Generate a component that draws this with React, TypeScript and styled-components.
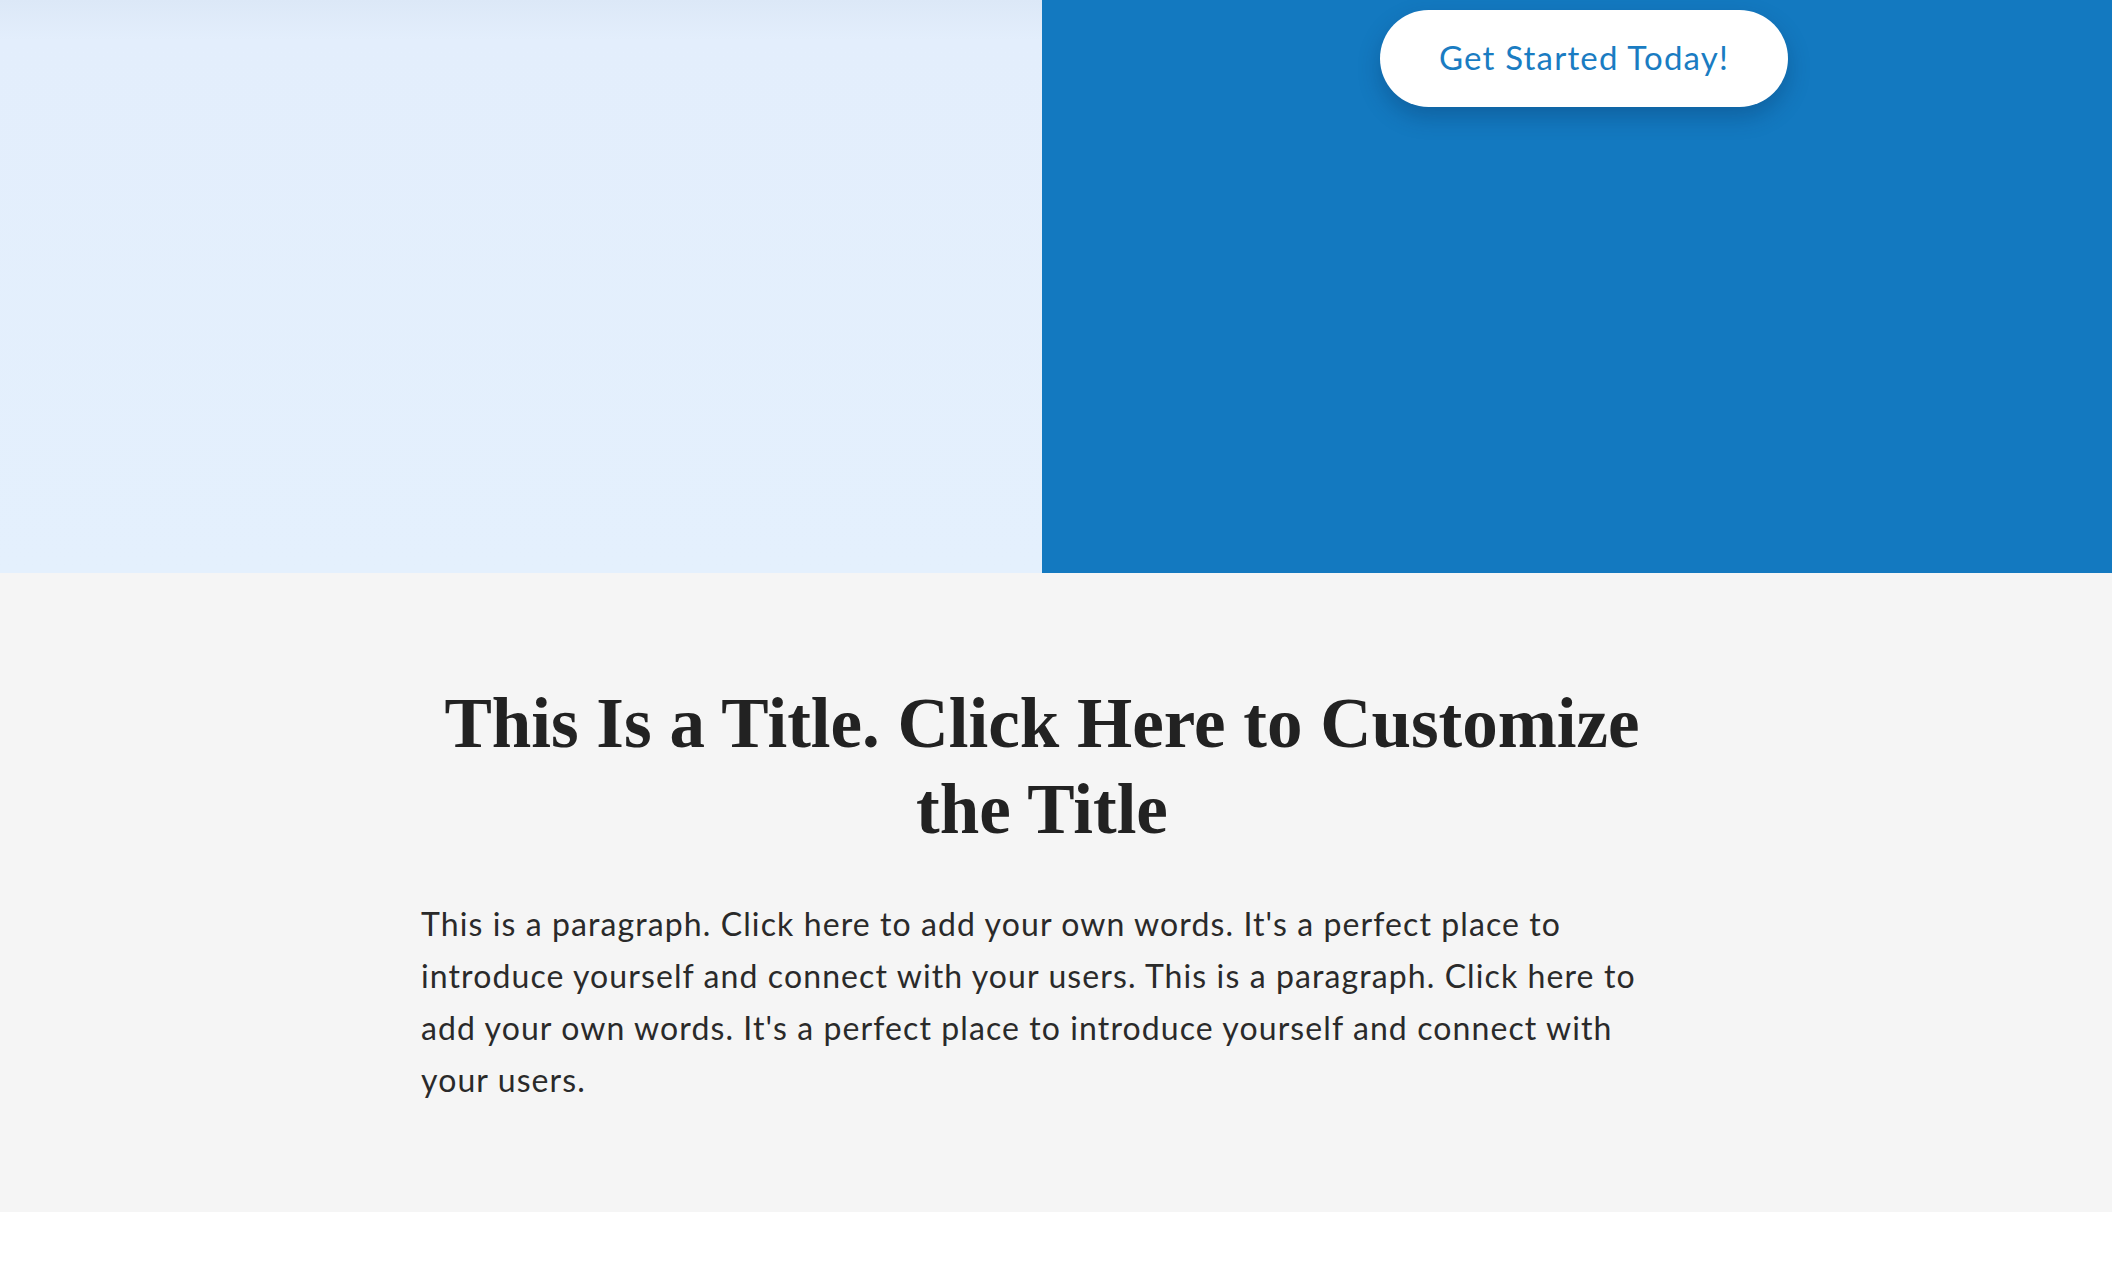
import React from "react";
import { styled, createGlobalStyle } from "styled-components";

const GlobalStyle = createGlobalStyle`
  html, body {
    margin: 0;
    padding: 0;
    background: #ffffff;
  }
  body {
    font-family: Lato, "Noto Sans", sans-serif;
  }
`;

function App() {
  return (
    <>
      <GlobalStyle />
      <Page>
        <Hero>
          <LightPanel />
          <BluePanel>
            <CtaButton type="button">Get Started Today!</CtaButton>
          </BluePanel>
        </Hero>
        <IntroSection>
          <IntroInner>
            <Title>This Is a Title. Click Here to Customize the Title</Title>
            <Paragraph>
              This is a paragraph. Click here to add your own words. It's a
              perfect place to introduce yourself and connect with your users.
              This is a paragraph. Click here to add your own words. It's a
              perfect place to introduce yourself and connect with your users.
            </Paragraph>
          </IntroInner>
        </IntroSection>
        <Footer />
      </Page>
    </>
  );
}

const Page = styled.div`
  width: 100%;
  min-height: 1280px;
  display: flex;
  flex-direction: column;
`;

const Hero = styled.section`
  display: grid;
  grid-template-columns: 1042px 1fr;
  height: 573px;
`;

const LightPanel = styled.div`
  background: linear-gradient(to bottom, #dce8f7 0px, #e3eefc 40px, #e4f0fd 100%);
`;

const BluePanel = styled.div`
  background: #1379c0;
  display: flex;
  justify-content: center;
  align-items: flex-start;
  padding: 10px 0 0 14px;
`;

const CtaButton = styled.button`
  width: 408px;
  height: 97px;
  padding: 0 0 3px;
  border: none;
  border-radius: 49px;
  background: #ffffff;
  color: #1a7cc2;
  font-family: Lato, "Noto Sans", sans-serif;
  font-size: 33px;
  font-weight: 400;
  letter-spacing: 1.2px;
  cursor: pointer;
  box-shadow: 0 10px 22px rgba(8, 40, 80, 0.28);
`;

const IntroSection = styled.section`
  background: #f5f5f5;
  padding: 107px 0 106px 421px;
  display: flex;
  justify-content: flex-start;
`;

const IntroInner = styled.div`
  width: 1242px;
  display: flex;
  flex-direction: column;
`;

const Title = styled.h1`
  margin: 0;
  font-family: "Liberation Serif", "DejaVu Serif", serif;
  font-weight: 700;
  font-size: 71px;
  line-height: 86px;
  letter-spacing: 0;
  color: #222222;
  text-align: center;
`;

const Paragraph = styled.p`
  margin: 46px 0 0;
  font-family: Lato, "Noto Sans", sans-serif;
  font-size: 32px;
  line-height: 52px;
  letter-spacing: 1.1px;
  color: #2a2a2a;
`;

const Footer = styled.footer`
  flex: 1;
  background: #ffffff;
`;

export default App;
